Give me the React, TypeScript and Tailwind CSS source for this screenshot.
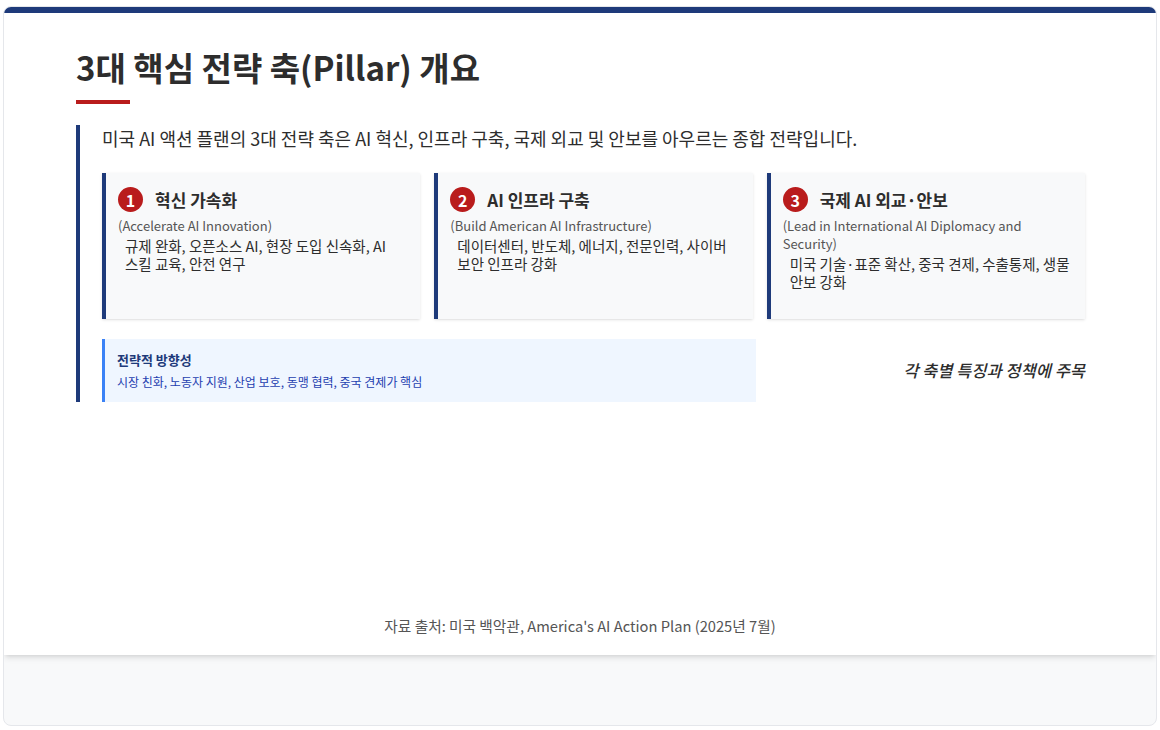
import React from 'react';

const pillars = [
    {
        n: '1',
        title: '혁신 가속화',
        en: '(Accelerate AI Innovation)',
        desc: '규제 완화, 오픈소스 AI, 현장 도입 신속화, AI 스킬 교육, 안전 연구',
    },
    {
        n: '2',
        title: 'AI 인프라 구축',
        en: '(Build American AI Infrastructure)',
        desc: '데이터센터, 반도체, 에너지, 전문인력, 사이버 보안 인프라 강화',
    },
    {
        n: '3',
        title: '국제 AI 외교·안보',
        en: '(Lead in International AI Diplomacy and Security)',
        desc: '미국 기술·표준 확산, 중국 견제, 수출통제, 생물 안보 강화',
    },
];

export default function App() {
    return (
        <div
            className="w-[1160px] h-[730px] bg-white px-[3px] pt-[6px] pb-[4px]"
            style={{ fontFamily: '"Noto Sans CJK KR", "Noto Sans", sans-serif' }}
        >
            <div className="h-full flex flex-col rounded-lg border border-gray-200 bg-[#f8f9fa] overflow-hidden">
                {/* Slide */}
                <div className="h-[648px] flex flex-col bg-white border-t-[6px] border-[#1e3a7a] shadow-md px-[72px] pt-[30px]">
                    <h1 className="text-[33px] font-bold text-[#2d2d2d] leading-[48px]">3대 핵심 전략 축(Pillar) 개요</h1>
                    <div className="w-[54px] h-[4px] bg-[#b91c1c] mt-[9px]" />

                    <div className="mt-[21px] border-l-[4px] border-[#1e3a7a] pl-[22px]">
                        <p className="text-[18px] text-[#2d2d2d] leading-[26px] break-keep">
                            미국 AI 액션 플랜의 3대 전략 축은 AI 혁신, 인프라 구축, 국제 외교 및 안보를 아우르는 종합 전략입니다.
                        </p>

                        <div className="mt-[22px] grid grid-cols-3 gap-[14px] w-[983px]">
                            {pillars.map((p) => (
                                <div key={p.n} className="h-[146px] bg-[#f8f9fa] border-l-[4px] border-[#1e3a7a] shadow-sm pl-[12px] pr-[14px] pt-[14px]">
                                    <div className="flex items-center gap-[12px]">
                                        <span className="w-[25px] h-[25px] rounded-full bg-[#b91c1c] text-white text-[16px] font-bold flex items-center justify-center">{p.n}</span>
                                        <span className="text-[17px] font-bold text-[#2d2d2d]">{p.title}</span>
                                    </div>
                                    <div className="mt-[4px] text-[13px] text-[#555] leading-[18px]">{p.en}</div>
                                    <div className="mt-[2px] pl-[7px] text-[14.5px] text-[#2d2d2d] leading-[18px] break-keep">{p.desc}</div>
                                </div>
                            ))}
                        </div>

                        <div className="mt-[20px] flex items-center justify-between w-[983px]">
                            <div className="w-[654px] h-[63px] bg-[#eff6ff] border-l-[3px] border-[#3b82f6] pl-[12px] pt-[11px]">
                                <div className="text-[13px] font-bold text-[#1e3a7a] leading-[20px]">전략적 방향성</div>
                                <div className="mt-[4px] text-[12px] text-[#1e40af] leading-[16px]">시장 친화, 노동자 지원, 산업 보호, 동맹 협력, 중국 견제가 핵심</div>
                            </div>
                            <div className="text-[16.5px] italic font-medium text-[#2d2d2d]">각 축별 특징과 정책에 주목</div>
                        </div>
                    </div>

                    <div className="mt-auto mb-[18px] text-center text-[14.7px] text-[#555]">
                        자료 출처: 미국 백악관, America's AI Action Plan (2025년 7월)
                    </div>
                </div>
            </div>
        </div>
    );
}
